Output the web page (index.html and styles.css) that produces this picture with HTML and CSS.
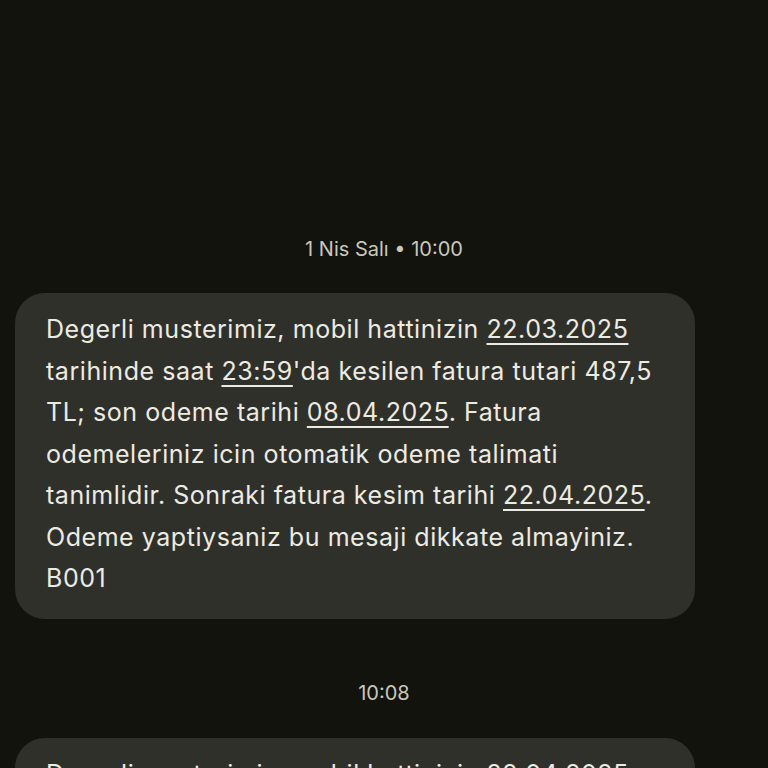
FILE: index.html
```html
<!DOCTYPE html>
<html lang="tr">
<head>
<meta charset="utf-8">
<title>Mesajlar</title>
<link rel="stylesheet" href="styles.css">
</head>
<body>
<main class="thread">
  <div class="stamp">1 Nis Salı • 10:00</div>
  <div class="bubble">
    <p class="msg">Degerli musterimiz, mobil hattinizin <span class="link">22.03.2025</span> tarihinde saat <span class="link">23:59</span>'da kesilen fatura tutari 487,5 TL; son odeme tarihi <span class="link">08.04.2025</span>. Fatura odemeleriniz icin otomatik odeme talimati tanimlidir. Sonraki fatura kesim tarihi <span class="link">22.04.2025</span>. Odeme yaptiysaniz bu mesaji dikkate almayiniz. B001</p>
  </div>
  <div class="stamp stamp-gap">10:08</div>
  <div class="bubble">
    <p class="msg">Degerli musterimiz, mobil hattinizin <span class="link">22.04.2025</span> tarihinde saat <span class="link">23:59</span>'da kesilen fatura tutari 487,5 TL; son odeme tarihi <span class="link">08.05.2025</span>.</p>
  </div>
</main>
</body>
</html>
```

FILE: styles.css
```css
html, body {
  margin: 0;
  padding: 0;
  background: #13130e;
  height: 768px;
  overflow: hidden;
}

.thread {
  display: flex;
  flex-direction: column;
  padding: 237px 0 0 15px;
  font-family: Inter, Roboto, "Liberation Sans", sans-serif;
}

.stamp {
  align-self: center;
  margin-left: -15px;
  font-size: 20px;
  line-height: 24px;
  color: #c9c8bd;
  margin-bottom: 32px;
}

.stamp-gap {
  margin-top: 62px;
  margin-bottom: 33px;
}

.bubble {
  width: 680px;
  box-sizing: border-box;
  background: #30302b;
  border-radius: 30px;
  padding: 16px 14px 19px 31px;
}

.msg {
  margin: 0;
  font-size: 25px;
  letter-spacing: 0.55px;
  line-height: 41.5px;
  color: #ecebe3;
}

.link {
  text-decoration: underline;
  text-decoration-thickness: 2px;
  text-underline-offset: 5px;
}
```
